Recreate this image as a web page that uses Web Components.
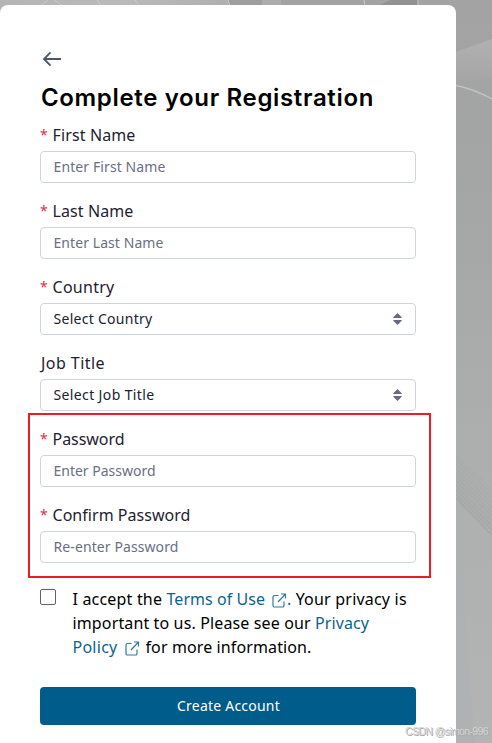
<!DOCTYPE html>
<html lang="en">
<head>
<meta charset="utf-8">
<title>Complete your Registration</title>
<style>
html,body{margin:0;height:743px;overflow:hidden}
body{font-family:"Noto Sans","Open Sans",sans-serif;color:#1a1a24}
</style>
</head>
<body>
<registration-page></registration-page>
<script>
// Text run whose tracking is adjusted to fill a given width.
class FitText extends HTMLElement{
  connectedCallback(){
    const r=this.attachShadow({mode:'open'});
    r.innerHTML='<style>:host{display:inline-block;white-space:pre}</style><span></span>';
    const s=r.querySelector('span');
    s.textContent=this.getAttribute('text');
    const w=+this.getAttribute('w'), n=s.textContent.length;
    s.style.letterSpacing=((w-s.getBoundingClientRect().width)/n)+'px';
  }
}
class BackArrow extends HTMLElement{
  connectedCallback(){
    this.attachShadow({mode:'open'}).innerHTML=`<style>:host{display:block;height:16px}svg{display:block}</style>
    <svg width="24" height="16" viewBox="0 0 24 16" fill="none" stroke="#4b5563" stroke-width="1.800"><path d="M21 8H4M10.500 1.300L4 8l6.500 6.700"/></svg>`;
  }
}
class LinkIcon extends HTMLElement{
  connectedCallback(){
    this.attachShadow({mode:'open'}).innerHTML=`<style>:host{display:block;width:15px;height:15px;white-space:normal;line-height:0}svg{display:block}</style>
    <svg width="15" height="15" viewBox="0 0 15 15" fill="none" stroke="#2f7ba3" stroke-width="1.200"><path d="M6.500 2.500h-4a1.500 1.500 0 0 0-1.500 1.500v8.500a1.500 1.500 0 0 0 1.500 1.500h8a1.500 1.500 0 0 0 1.500-1.500v-4M9 1h4.500v4.500M13.500 1L6 9"/></svg>`;
  }
}
class FormField extends HTMLElement{
  connectedCallback(){
    const a=n=>this.getAttribute(n);
    const sel=this.hasAttribute('select');
    const req=this.hasAttribute('required');
    this.attachShadow({mode:'open'}).innerHTML=`<style>
    :host{display:block;height:76px}
    .label{display:flex;height:32px;line-height:32px;font-size:16px;color:#1f2130;padding-left:${req?0:1}px}
    .star{width:12.500px;color:#d6344a;font-size:14px;line-height:31px}
    .box{box-sizing:border-box;height:32px;border:1px solid #ced3dc;border-radius:4px;background:#fff;display:flex;align-items:center;justify-content:space-between;padding:0 13px 0 12.500px;font-size:14px;line-height:28px;color:${sel?'#20222e':'#6b6f82'}}
    </style>
    <div class="label">${req?'<span class="star">*</span>':''}<fit-text text="${a('label')}" w="${a('lw')}"></fit-text></div>
    <div class="box"><fit-text text="${a('value')}" w="${a('vw')}"></fit-text>${sel?'<svg width="9" height="12" viewBox="0 0 9 12" fill="#676a80"><path d="M4.500 0L8.700 4.200V5H.3v-.8zM4.500 12L8.700 7.800V7H.3v.8z"/></svg>':''}</div>`;
  }
}
class TermsConsent extends HTMLElement{
  connectedCallback(){
    this.attachShadow({mode:'open'}).innerHTML=`<style>
    :host{display:grid;grid-template-columns:32.500px 1fr;font-size:16px;line-height:24px;color:#000}
    .check{box-sizing:border-box;width:16px;height:16px;border:1px solid #5f6178;border-radius:2px;margin-top:2px}
    .line{display:flex;height:24px;align-items:center;white-space:pre}
    a{color:#0b648f}
    link-icon{margin:2px 0 0 7px}
    </style>
    <div class="check"></div>
    <div>
      <div class="line"><fit-text text="I accept the " w="94"></fit-text><a><fit-text text="Terms of Use" w="98.500"></fit-text></a><link-icon></link-icon><a>.</a><fit-text text=" Your privacy is" w="115.500"></fit-text></div>
      <div class="line"><fit-text text="important to us. Please see our " w="242.500"></fit-text><a><fit-text text="Privacy" w="54"></fit-text></a></div>
      <div class="line"><a><fit-text text="Policy" w="45"></fit-text></a><link-icon></link-icon><fit-text text=" " w="6"></fit-text><fit-text text="for more information." w="166"></fit-text></div>
    </div>`;
  }
}
class PrimaryButton extends HTMLElement{
  connectedCallback(){
    this.attachShadow({mode:'open'}).innerHTML=`<style>:host{display:flex;box-sizing:border-box;height:38px;padding:0 0 2px 1px;border-radius:4px;background:#005c8a;color:#fff;font-size:14px;align-items:center;justify-content:center}</style><slot></slot>`;
  }
}
class PageBackdrop extends HTMLElement{
  connectedCallback(){
    let lines='';
    for(let i=0;i<11;i++)lines+=`<path d="M456 ${456+i*4.2}L492 ${489+i*4.6}" stroke="#a0a2a1" stroke-width="1.800" opacity="${.15+i*.04}"/>`;
    this.attachShadow({mode:'open'}).innerHTML=`<style>:host{display:block;position:absolute;inset:0}svg{display:block}</style>
    <svg width="492" height="743" viewBox="0 0 492 743" fill="none">
    <defs><linearGradient id="g" x2="0" y2="1"><stop stop-color="#a3a3a3"/><stop offset=".25" stop-color="#a4a5a5"/><stop offset=".6" stop-color="#adaeae"/><stop offset="1" stop-color="#b3b4b4"/></linearGradient>
    <linearGradient id="b" x2="0" y2="1"><stop stop-color="#b1b1b1"/><stop offset="1" stop-color="#a5a5a5"/></linearGradient>
    <linearGradient id="t"><stop stop-color="#b4b4b4"/><stop offset=".5" stop-color="#bababa"/><stop offset=".8" stop-color="#b4b4b4"/><stop offset="1" stop-color="#b0b0b0"/></linearGradient></defs>
    <path fill="url(#g)" d="M0 0h492v743H0z"/>
    <path fill="url(#t)" d="M0 0h229v14H0z"/>
    <path fill="#9e9e9e" d="M228 0h38v6h-36z"/><path fill="#adadad" d="M262 0h19v6h-19z"/>
    <path fill="#929292" d="M390 0h28v6h-40z"/>
    <path d="M48 0L40 6M54 0l10 6M97 0l5 6M135 0l5 6M228 0l2 6M364 0l1 6M418 0v6" stroke="#cacaca" stroke-width="1"/>
    <path fill="url(#b)" d="M456 52L492 39V78L456 83z"/>
    <path d="M456 85.500Q474 89 492 99" stroke="#c2c2c2" stroke-width="1.300"/>
    ${lines}
    <path fill="#aeb0b3" d="M456 503L475 743H456z" opacity=".6"/>
    </svg>`;
  }
}
class RegistrationPage extends HTMLElement{
  connectedCallback(){
    this.attachShadow({mode:'open'}).innerHTML=`<style>
    :host{display:block;position:relative;box-sizing:border-box;width:492px;height:743px;padding-top:5px;overflow:hidden}
    main{position:relative;box-sizing:border-box;width:456px;height:738px;background:#fff;border-radius:8px 8px 0 0;padding:46px 40px 0}
    h1{margin:13px 0 0;font:600 24px/36px Inter,sans-serif;color:#000;padding-left:1px;height:36px}
    .fields{margin-top:3px}
    terms-consent{margin-top:12px}
    primary-button{margin-top:28px}
    .mark{position:absolute;left:28px;top:413px;width:403px;height:165px;box-sizing:border-box;border:2px solid #ed1c24}
    .sign{position:absolute;right:4px;bottom:5px;font:10.500px/14px "Liberation Sans",sans-serif;color:#d4d4d4;text-shadow:1px 1px 0 #a9a9a9}
    </style>
    <page-backdrop></page-backdrop>
    <main>
      <back-arrow></back-arrow>
      <h1><fit-text text="Complete your Registration" w="333"></fit-text></h1>
      <div class="fields">
        <form-field required label="First Name" lw="83" value="Enter First Name" vw="112"></form-field>
        <form-field required label="Last Name" lw="81" value="Enter Last Name" vw="110"></form-field>
        <form-field required select label="Country" lw="62" value="Select Country" vw="99"></form-field>
        <form-field select label="Job Title" lw="64" value="Select Job Title" vw="101"></form-field>
        <form-field required label="Password" lw="72" value="Enter Password" vw="102"></form-field>
        <form-field required label="Confirm Password" lw="138" value="Re-enter Password" vw="125"></form-field>
      </div>
      <terms-consent></terms-consent>
      <primary-button><fit-text text="Create Account" w="103"></fit-text></primary-button>
    </main>
    <div class="mark"></div>
    <div class="sign"><fit-text text="CSDN @simon-996" w="83"></fit-text></div>`;
  }
}
customElements.define('fit-text',FitText);
customElements.define('back-arrow',BackArrow);
customElements.define('link-icon',LinkIcon);
customElements.define('form-field',FormField);
customElements.define('terms-consent',TermsConsent);
customElements.define('primary-button',PrimaryButton);
customElements.define('page-backdrop',PageBackdrop);
customElements.define('registration-page',RegistrationPage);
</script>
</body>
</html>
